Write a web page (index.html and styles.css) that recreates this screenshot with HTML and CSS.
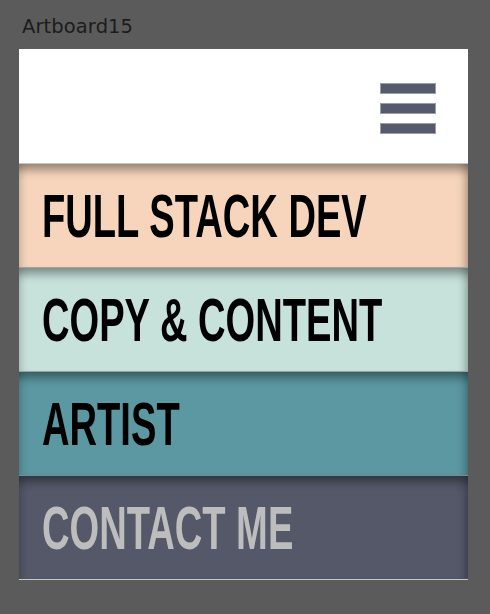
FILE: index.html
```html
<!DOCTYPE html>
<html>
<head>
<meta charset="utf-8">
<link rel="stylesheet" href="styles.css">
</head>
<body>
<div class="label">Artboard15</div>
<div class="artboard">
  <header class="top">
    <svg class="burger" width="56" height="52" viewBox="0 0 56 52">
      <rect x="0.5" y="0.5" width="55" height="10" fill="#555a6c" stroke="#9a9dab" stroke-width="1"/>
      <rect x="0.5" y="20.5" width="55" height="10" fill="#555a6c" stroke="#9a9dab" stroke-width="1"/>
      <rect x="0.5" y="40.5" width="55" height="10" fill="#555a6c" stroke="#9a9dab" stroke-width="1"/>
    </svg>
  </header>
  <nav class="menu">
    <div class="band peach"><span class="txt">FULL STACK DEV</span></div>
    <div class="band mint"><span class="txt">COPY &amp; CONTENT</span></div>
    <div class="band teal"><span class="txt">ARTIST</span></div>
    <div class="band slate"><span class="txt light">CONTACT ME</span></div>
  </nav>
</div>
</body>
</html>
```
FILE: styles.css
```css
html, body {
  margin: 0;
  padding: 0;
  background: #5b5b5b;
  width: 490px;
  height: 614px;
  overflow: hidden;
}
.label {
  font-family: "DejaVu Sans", "Open Sans", sans-serif;
  font-size: 19.5px;
  color: #1c1c1c;
  padding: 16px 0 0 22px;
  height: 49px;
  box-sizing: border-box;
  line-height: 22px;
  letter-spacing: 0.1px;
}
.artboard {
  margin-left: 19px;
  width: 449px;
  background: #fff;
  display: flex;
  flex-direction: column;
}
.top {
  height: 115px;
  display: flex;
  justify-content: flex-end;
  align-items: flex-start;
  padding: 34px 32px 0 0;
  box-sizing: border-box;
  border-bottom: 1px solid #c9c4c0;
}
.burger { display: block; }
.menu { display: flex; flex-direction: column; }
.band {
  height: 104px;
  box-sizing: border-box;
  display: flex;
  align-items: center;
  padding-left: 23px;
  border-bottom: 1px solid rgba(255,255,255,0.35);
  box-shadow:
    inset 0 12px 10px -6px rgba(0,0,0,0.38),
    inset 9px 0 9px -7px rgba(0,0,0,0.18),
    inset -10px 0 9px -7px rgba(0,0,0,0.28);
  overflow: hidden;
}
.peach { background: #f6d5bc; border-bottom-color: #a99f98; }
.mint { background: #c7e2db; border-bottom-color: #8fa3a0; }
.teal { background: #5b98a1; border-bottom-color: #6f8f94; }
.slate { background: #545869; border-bottom-color: #c8c8c8; }
.txt {
  font-family: "Liberation Sans", Arial, sans-serif;
  font-weight: bold;
  font-size: 61px;
  line-height: 61px;
  color: #000;
  display: inline-block;
  white-space: nowrap;
  transform: scaleX(0.625);
  transform-origin: left center;
  margin-top: 2px;
}
.txt.light { color: #bdbdbd; }
```
